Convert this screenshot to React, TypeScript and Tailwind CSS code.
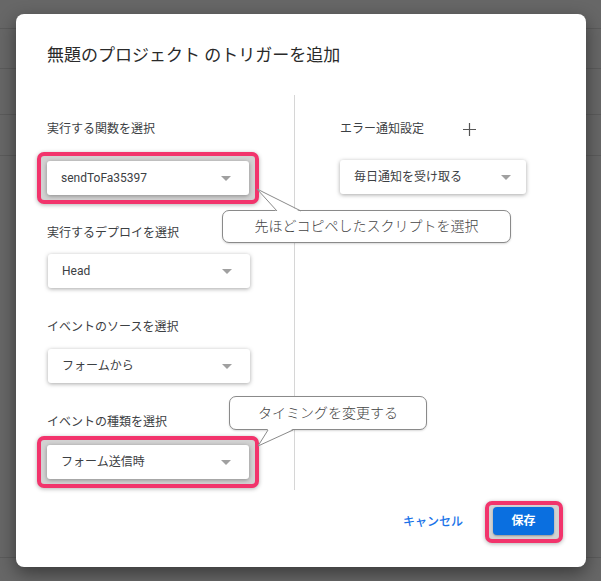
import type { ReactNode } from "react";

function Caret() {
  return (
    <svg width="10" height="5" viewBox="0 0 10 5">
      <path d="M0 0h10L5 5z" fill="#a0a0a0" />
    </svg>
  );
}

function Select({ value, className }: { value: string; className: string }) {
  return (
    <div
      className={`h-[34px] bg-white rounded-[3px] shadow-[0_1px_4px_rgba(0,0,0,0.35)] flex items-center justify-between pl-[14px] text-[12px] text-[#3c4043] ${className}`}
    >
      <span>{value}</span>
      <Caret />
    </div>
  );
}

function Highlight({ children, className }: { children: ReactNode; className: string }) {
  return (
    <div
      className={`w-fit border-[4px] border-[#f2346c] rounded-[7px] bg-[#d2d2d2] shadow-[0_1px_4px_rgba(0,0,0,0.3)] ${className}`}
    >
      {children}
    </div>
  );
}

function Label({ children, className = "" }: { children: ReactNode; className?: string }) {
  return <div className={`h-[20px] leading-[20px] text-[12px] text-[#3c4043] ${className}`}>{children}</div>;
}

function Callout({
  text,
  box,
  tail,
}: {
  text: string;
  box: string;
  tail: ReactNode;
}) {
  return (
    <>
      <div
        className={`absolute bg-white border border-[#8a8a8a] rounded-[7px] flex items-center justify-center text-[14px] font-light text-[#444] shadow-[0_1px_2px_rgba(0,0,0,0.15)] ${box}`}
      >
        {text}
      </div>
      {tail}
    </>
  );
}

export default function App() {
  return (
    <div className="relative w-[601px] h-[581px] overflow-hidden bg-[#676767] font-['Roboto','Noto_Sans_CJK_JP',sans-serif]">
      {/* page behind the overlay */}
      <div className="flex flex-col">
        <div className="h-[29px] border-b border-[#5b5b5b]" />
        <div className="h-[40px] border-b border-[#5b5b5b]" />
        <div className="h-[46px] border-b border-[#5b5b5b]" />
        <div className="h-[41px] border-b border-[#5b5b5b]" />
        <div className="h-[402px] border-b border-[#5b5b5b]" />
      </div>

      {/* dialog */}
      <div className="absolute left-[16px] top-[14px] w-[570px] h-[553px] bg-white rounded-[8px] shadow-[0_6px_18px_rgba(0,0,0,0.45)] flex flex-col">
        <h1 className="pl-[31px] pt-[29px] text-[17px] leading-[24px] text-[#2a2a2a]">
          無題のプロジェクト のトリガーを追加
        </h1>

        <div className="mt-[28px] flex h-[395px] pl-[31px]">
          <div className="w-[247px] flex flex-col pt-[24px]">
            <Label>実行する関数を選択</Label>
            <Highlight className="mt-[13px] -ml-[10px] px-[6px] py-[5px]">
              <Select value="sendToFa35397" className="w-[202px] pr-[18px]" />
            </Highlight>
            <Label className="mt-[19px]">実行するデプロイを選択</Label>
            <Select value="Head" className="mt-[11px] ml-px w-[202px] pr-[18px]" />
            <Label className="mt-[29px]">イベントのソースを選択</Label>
            <Select value="フォームから" className="mt-[12px] ml-px w-[202px] pr-[18px]" />
            <Label className="mt-[29px]">イベントの種類を選択</Label>
            <Highlight className="mt-[4px] -ml-[10px] px-[6px] py-[5px]">
              <Select value="フォーム送信時" className="w-[202px] pr-[18px]" />
            </Highlight>
          </div>
          <div className="w-px bg-[#d6d6d6]" />
          <div className="flex flex-col pl-[45px] pt-[24px]">
            <div className="flex items-center">
              <Label>エラー通知設定</Label>
              <svg className="ml-[39px]" width="13" height="13" viewBox="0 0 13 13">
                <path d="M6.5 0v13M0 6.5h13" stroke="#555" strokeWidth="1.2" />
              </svg>
            </div>
            <Select value="毎日通知を受け取る" className="mt-[21px] w-[186px] pr-[15px]" />
          </div>
        </div>

        <div className="mt-[11px] flex justify-end items-center pr-[23px]">
          <button className="mr-[22px] text-[12px] font-medium text-[#1a73e8]">キャンセル</button>
          <Highlight className="pl-[4px] pr-[5px] pt-[2px] pb-[4px]">
            <button className="w-[61px] h-[28px] rounded-[4px] bg-[#0a6fe0] text-white text-[12px] font-bold shadow-[0_1px_2px_rgba(0,0,0,0.3)]">
              保存
            </button>
          </Highlight>
        </div>
      </div>

      <Callout
        text="先ほどコピペしたスクリプトを選択"
        box="left-[222px] top-[210px] w-[289px] h-[33px]"
        tail={
          <svg className="absolute left-[250px] top-[185px]" width="60" height="30" viewBox="0 0 60 30">
            <polygon points="7,4 27,27 51,27" fill="#fff" />
            <polyline points="27,26 7,4 51,26" fill="none" stroke="#8a8a8a" strokeWidth="1" />
          </svg>
        }
      />
      <Callout
        text="タイミングを変更する"
        box="left-[229px] top-[396px] w-[198px] h-[34px]"
        tail={
          <svg className="absolute left-[250px] top-[426px]" width="50" height="25" viewBox="0 0 50 25">
            <polygon points="18,3 43,3 8,20" fill="#fff" />
            <polyline points="18,4 8,20 43,4" fill="none" stroke="#8a8a8a" strokeWidth="1" />
          </svg>
        }
      />
    </div>
  );
}
